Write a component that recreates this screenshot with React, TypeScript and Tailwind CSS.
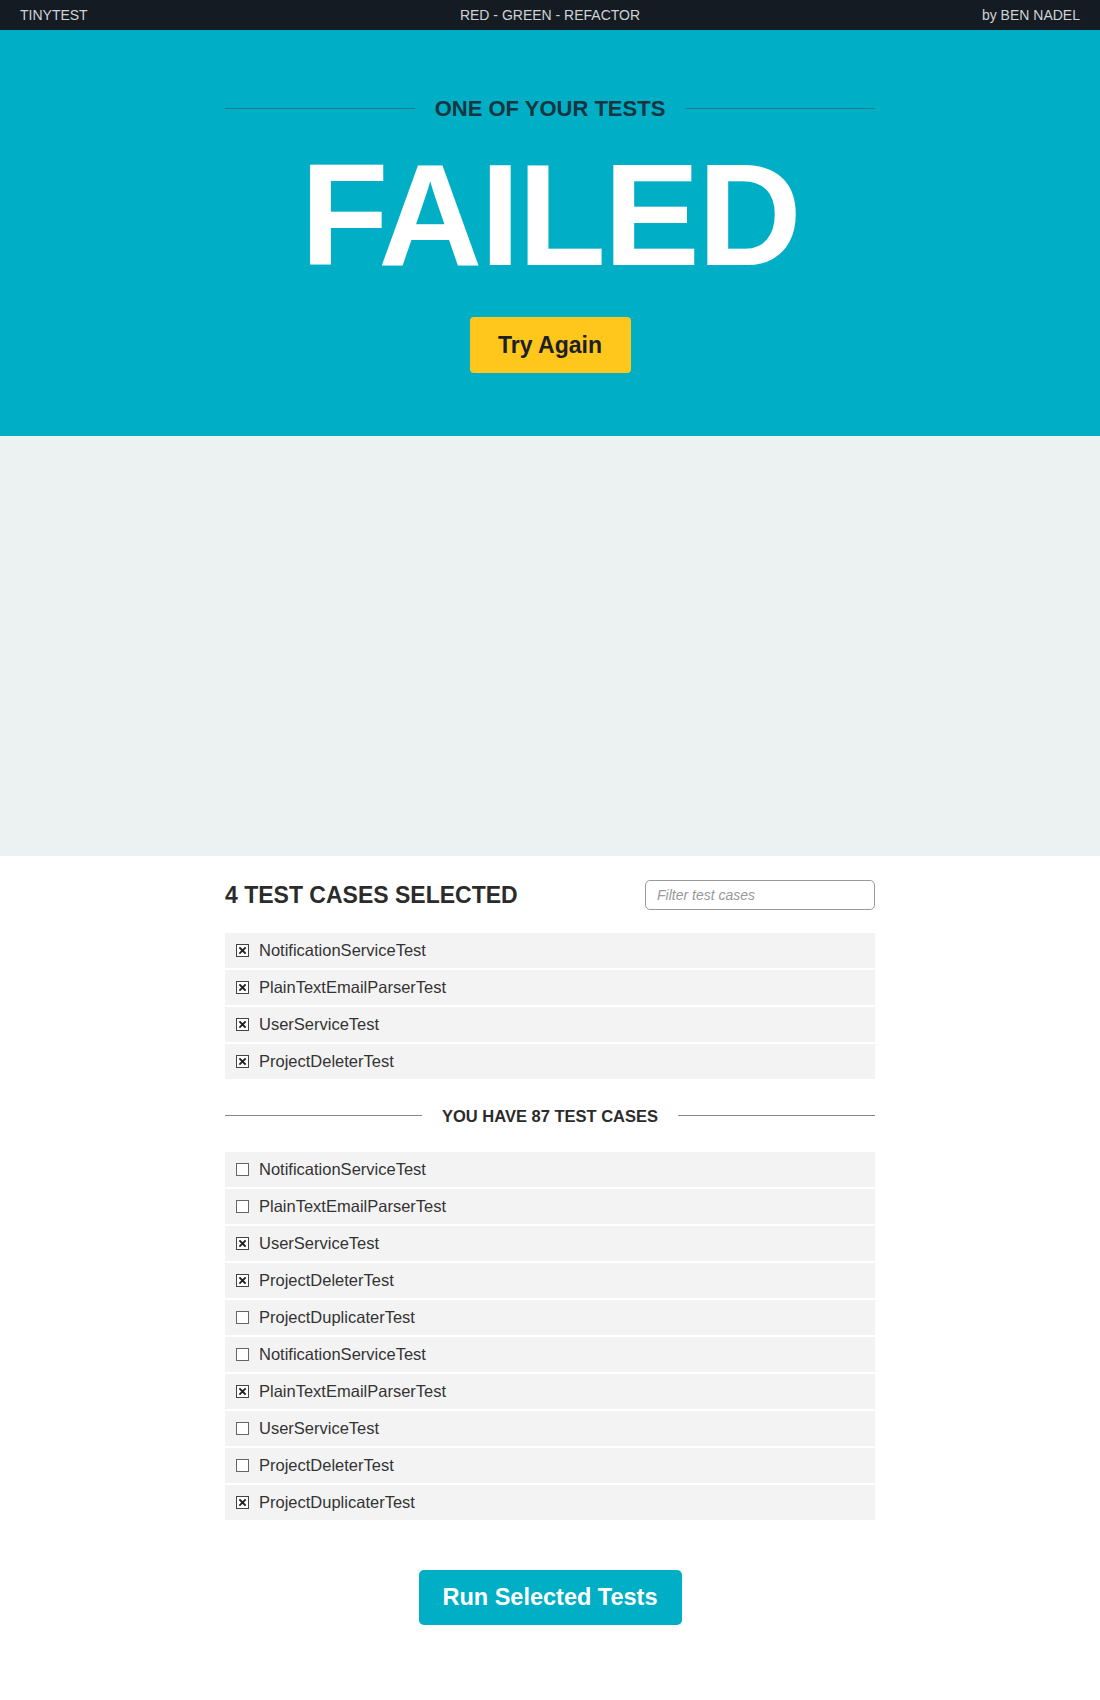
import { useState } from 'react'

interface TestCase {
  name: string
  checked: boolean
}

const selectedCases: TestCase[] = [
  { name: 'NotificationServiceTest', checked: true },
  { name: 'PlainTextEmailParserTest', checked: true },
  { name: 'UserServiceTest', checked: true },
  { name: 'ProjectDeleterTest', checked: true },
]

const allCases: TestCase[] = [
  { name: 'NotificationServiceTest', checked: false },
  { name: 'PlainTextEmailParserTest', checked: false },
  { name: 'UserServiceTest', checked: true },
  { name: 'ProjectDeleterTest', checked: true },
  { name: 'ProjectDuplicaterTest', checked: false },
  { name: 'NotificationServiceTest', checked: false },
  { name: 'PlainTextEmailParserTest', checked: true },
  { name: 'UserServiceTest', checked: false },
  { name: 'ProjectDeleterTest', checked: false },
  { name: 'ProjectDuplicaterTest', checked: true },
]

function CheckBox({ checked }: { checked: boolean }) {
  return (
    <svg width="13" height="13" viewBox="0 0 13 13" className="shrink-0">
      <rect x="0.5" y="0.5" width="12" height="12" fill="#fff" stroke={checked ? '#444' : '#666'} />
      {checked && (
        <path d="M4 4 L9 9 M9 4 L4 9" stroke="#222" strokeWidth="1.8" strokeLinecap="square" />
      )}
    </svg>
  )
}

function CaseList({ items }: { items: TestCase[] }) {
  return (
    <ul className="flex flex-col gap-[2px]">
      {items.map((item, i) => (
        <li key={i} className="flex h-[35px] items-center gap-[10px] bg-[#f3f3f3] pl-[11px]">
          <CheckBox checked={item.checked} />
          <span className="text-[16.5px] text-[#333]">{item.name}</span>
        </li>
      ))}
    </ul>
  )
}

export default function App() {
  const [filter, setFilter] = useState('')

  return (
    <div className="min-h-[1700px] bg-white font-['Liberation_Sans',Arial,sans-serif]">
      <header className="flex h-[30px] items-center justify-between bg-[#151b23] px-[20px] text-[14px] font-light text-[#d0d3d6]">
        <span className="w-[200px]">TINYTEST</span>
        <span>RED - GREEN - REFACTOR</span>
        <span className="w-[200px] text-right">by BEN NADEL</span>
      </header>

      <section className="flex h-[406px] flex-col items-center bg-[#00afc6]">
        <div className="mt-[62px] flex w-[650px] items-center gap-[20px]">
          <div className="h-px flex-1 bg-[#1c7d8b]" />
          <h2 className="text-[22px] font-bold text-[#163540]">ONE OF YOUR TESTS</h2>
          <div className="h-px flex-1 bg-[#1c7d8b]" />
        </div>
        <h1 className="mt-[19px] text-[144px] leading-[144px] font-bold tracking-[-0.015em] text-white">FAILED</h1>
        <button className="mt-[29px] h-[56px] w-[161px] rounded-[4px] bg-[#ffc61b] text-[23px] font-bold text-[#1b2029]">
          Try Again
        </button>
      </section>

      <section className="h-[420px] bg-[#ecf1f1]" />

      <main className="mx-auto w-[650px] pt-[22px] pb-[80px]">
        <div className="flex items-center justify-between">
          <h3 className="text-[23px] font-bold text-[#2b2b2b]">4 TEST CASES SELECTED</h3>
          <input
            value={filter}
            onChange={(e) => setFilter(e.target.value)}
            placeholder="Filter test cases"
            className="h-[30px] w-[230px] rounded-[5px] border border-[#999] px-[11px] text-[14px] italic text-[#333] outline-none placeholder:text-[#999]"
          />
        </div>

        <div className="mt-[20px]">
          <CaseList items={selectedCases} />
        </div>

        <div className="mt-[25px] flex items-center gap-[20px]">
          <div className="h-px flex-1 bg-[#888]" />
          <h4 className="text-[16.5px] font-bold text-[#2b2b2b]">YOU HAVE 87 TEST CASES</h4>
          <div className="h-px flex-1 bg-[#888]" />
        </div>

        <div className="mt-[24px]">
          <CaseList items={allCases} />
        </div>

        <div className="mt-[50px] flex justify-center">
          <button className="h-[55px] w-[263px] rounded-[5px] bg-[#00afc6] text-[23.5px] font-bold text-white">
            Run Selected Tests
          </button>
        </div>
      </main>
    </div>
  )
}
